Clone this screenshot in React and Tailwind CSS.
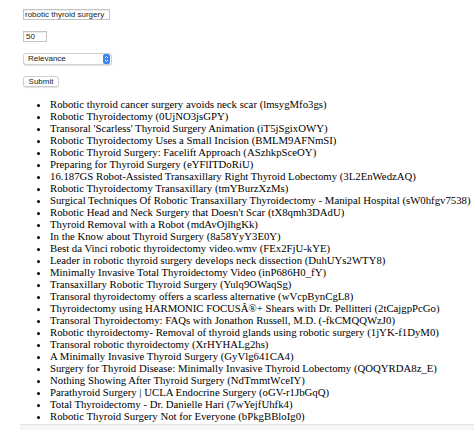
import React from 'react';

const results = [
  'Robotic thyroid cancer surgery avoids neck scar (lmsygMfo3gs)',
  'Robotic Thyroidectomy (0UjNO3jsGPY)',
  "Transoral 'Scarless' Thyroid Surgery Animation (iT5jSgixOWY)",
  'Robotic Thyroidectomy Uses a Small Incision (BMLM9AFNmSI)',
  'Robotic Thyroid Surgery: Facelift Approach (ASzhkpSceOY)',
  'Preparing for Thyroid Surgery (eYFlITDoRiU)',
  '16.187GS Robot-Assisted Transaxillary Right Thyroid Lobectomy (3L2EnWedzAQ)',
  'Robotic Thyroidectomy Transaxillary (tmYBurzXzMs)',
  'Surgical Techniques Of Robotic Transaxillary Thyroidectomy - Manipal Hospital (sW0hfgv7538)',
  "Robotic Head and Neck Surgery that Doesn't Scar (tX8qmh3DAdU)",
  'Thyroid Removal with a Robot (mdAvOjlhgKk)',
  'In the Know about Thyroid Surgery (8a58YyY3E0Y)',
  'Best da Vinci robotic thyroidectomy video.wmv (FEx2FjU-kYE)',
  'Leader in robotic thyroid surgery develops neck dissection (DuhUYs2WTY8)',
  'Minimally Invasive Total Thyroidectomy Video (inP686H0_fY)',
  'Transaxillary Robotic Thyroid Surgery (Yulq9OWaqSg)',
  'Transoral thyroidectomy offers a scarless alternative (wVcpBynCgL8)',
  'Thyroidectomy using HARMONIC FOCUSÂ®+ Shears with Dr. Pellitteri (2tCajgpPcGo)',
  'Transoral Thyroidectomy: FAQs with Jonathon Russell, M.D. (-fkCMQQWzJ0)',
  'Robotic thyroidectomy- Removal of thyroid glands using robotic surgery (1jYK-f1DyM0)',
  'Transoral robotic thyroidectomy (XrHYHALg2hs)',
  'A Minimally Invasive Thyroid Surgery (GyVlg641CA4)',
  'Surgery for Thyroid Disease: Minimally Invasive Thyroid Lobectomy (QOQYRDA8z_E)',
  'Nothing Showing After Thyroid Surgery (NdTmmtWceIY)',
  'Parathyroid Surgery | UCLA Endocrine Surgery (oGV-r1JbGqQ)',
  'Total Thyroidectomy - Dr. Danielle Hari (7wYejfUhfk4)',
  'Robotic Thyroid Surgery Not for Everyone (bPkgBBloIg0)',
];

// little blue up/down stepper on the right of the select
function Stepper() {
  return (
    <span className="flex h-[10px] w-[7px] items-center justify-center rounded-[2px] bg-[#3b86f0]">
      <svg width="5" height="8" viewBox="0 0 5 8" fill="none" stroke="#fff" strokeWidth="0.9">
        <path d="M1 3 L2.5 1.5 L4 3" />
        <path d="M1 5 L2.5 6.5 L4 5" />
      </svg>
    </span>
  );
}

export default function App() {
  return (
    <div className="h-[430px] w-[474px] overflow-hidden bg-white">
      <div className="flex flex-col items-start pl-[23px] pt-[9px] font-['Liberation_Sans',Arial,sans-serif] text-[8px] text-[#222]">
        <div className="flex h-[11px] w-[87px] items-center border border-[#c4c4c4] bg-white px-[1px] shadow-[inset_0_1px_1px_rgba(0,0,0,0.08)]">
          robotic thyroid surgery
        </div>
        <div className="mt-[11px] flex h-[11px] w-[24px] items-center border border-[#c4c4c4] bg-white px-[2px] shadow-[inset_0_1px_1px_rgba(0,0,0,0.08)]">
          50
        </div>
        <div className="mt-[11px] flex h-[12px] w-[89px] items-center justify-between rounded-[3px] border border-[#d0d0d0] bg-white pl-[4px] pr-[1px] shadow-[0_1px_1px_rgba(0,0,0,0.12)]">
          <span>Relevance</span>
          <Stepper />
        </div>
        <div className="mt-[11px] flex h-[11px] w-[36px] items-center justify-center rounded-[3px] border border-[#d0d0d0] bg-white shadow-[0_1px_1px_rgba(0,0,0,0.12)]">
          Submit
        </div>
      </div>

      <ul className="mt-[11px] list-disc pl-[50px] font-['Liberation_Serif','Times_New_Roman',serif] text-[10.75px] leading-[12px] text-black">
        {results.map((r) => (
          <li key={r} className="whitespace-nowrap">{r}</li>
        ))}
      </ul>

      <div className="mt-[2px] ml-[20px] h-[8px] border-t border-[#e2e2e2] bg-[#f6f6f6]" />
    </div>
  );
}
